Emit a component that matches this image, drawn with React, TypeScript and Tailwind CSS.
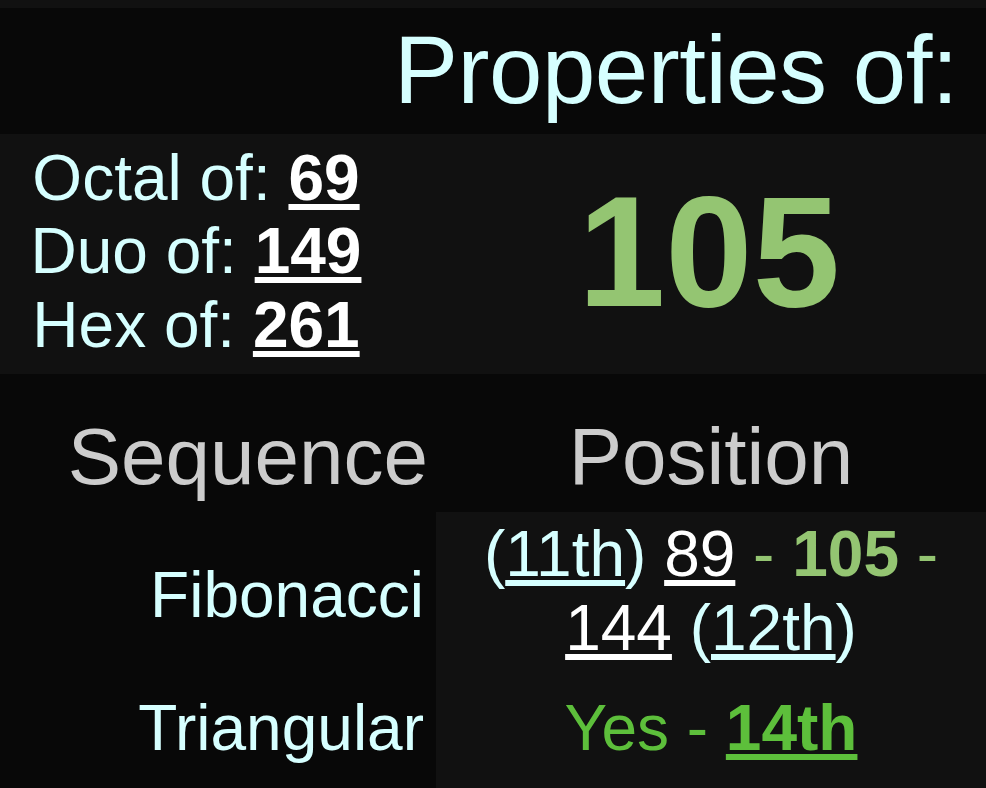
import React from "react";

const cyan = "text-[#d6ffff]";

export default function App() {
  return (
    <div
      className="w-[986px] h-[788px] overflow-hidden bg-[#111111] pt-[8px]"
      style={{ fontFamily: '"Liberation Sans", Arial, sans-serif' }}
    >
      {/* Header */}
      <div className="bg-[#080808] h-[126px] pt-[7px] pr-[28px] text-right">
        <span className={`${cyan} text-[96px] leading-[1.15] tracking-[-0.5px]`}>Properties of:</span>
      </div>

      {/* Base conversions + number */}
      <div className="flex h-[240px] bg-[#111111]">
        <div className="w-[392px] pb-[4px] flex flex-col justify-center text-center text-[64px] leading-[1.15]">
          <div className={cyan}>
            Octal of: <span className="text-white font-bold underline">69</span>
          </div>
          <div className={cyan}>
            Duo of: <span className="text-white font-bold underline">149</span>
          </div>
          <div className={cyan}>
            Hex of: <span className="text-white font-bold underline">261</span>
          </div>
        </div>
        <div className="flex-1 pb-[4px] flex items-center justify-center pl-[40px]">
          <span className="text-[157px] leading-[1.15] font-bold text-[#94c572]">105</span>
        </div>
      </div>

      {/* Column headers */}
      <div className="flex h-[138px] bg-[#080808] text-[80px] leading-[1.15] text-[#cccccc]">
        <div className="w-[436px] pt-[37px] pr-[8px] text-right">Sequence</div>
        <div className="flex-1 pt-[37px] text-center">Position</div>
      </div>

      {/* Rows */}
      <div className="flex text-[64px] leading-[1.15]">
        <div className="w-[436px] bg-[#080808] flex flex-col">
          <div className={`h-[167px] pr-[12px] flex items-center justify-end ${cyan}`}>
            Fibonacci
          </div>
          <div className={`h-[112px] pt-[13px] pr-[12px] text-right ${cyan}`}>Triangular</div>
        </div>
        <div className="flex-1 bg-[#111111] flex flex-col">
          <div className="h-[167px] pt-[6px] px-[8px] text-center">
            <span className={cyan}>(</span>
            <span className={`${cyan} underline`}>11th</span>
            <span className={cyan}>)</span>{" "}
            <span className="text-white underline">89</span>{" "}
            <span className="text-[#94c572]">-</span>{" "}
            <span className="text-[#94c572] font-bold">105</span>{" "}
            <span className="text-[#94c572]">-</span>{" "}
            <span className="text-white underline">144</span>{" "}
            <span className={cyan}>(</span>
            <span className={`${cyan} underline`}>12th</span>
            <span className={cyan}>)</span>
          </div>
          <div className="h-[112px] pt-[13px] text-center text-[#5dbf3b]">
            Yes - <span className="font-bold underline">14th</span>
          </div>
        </div>
      </div>
    </div>
  );
}
